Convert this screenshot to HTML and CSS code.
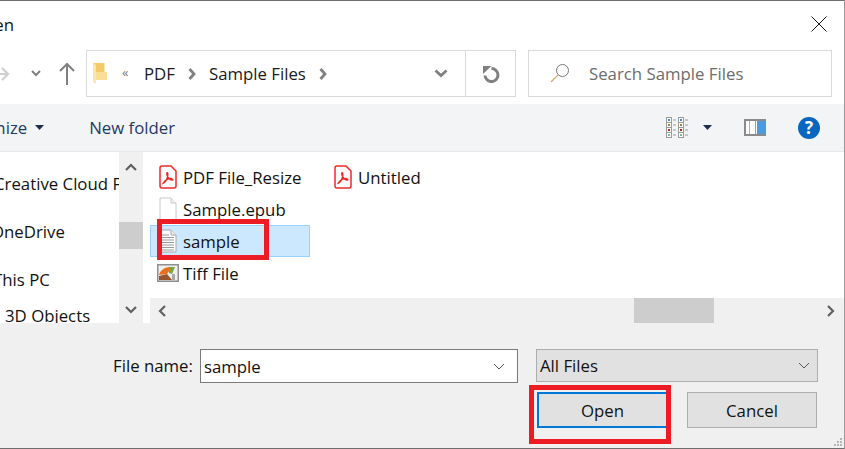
FILE: index.html
```html
<!DOCTYPE html>
<html lang="en">
<head>
<meta charset="utf-8">
<title>Open</title>
<link rel="stylesheet" href="styles.css">
</head>
<body>
<div class="dialog">
  <header class="titlebar">
    <span class="title">Open</span>
    <svg class="close" width="16" height="16" viewBox="0 0 16 16"><path d="M.5.5l15 15M15.500.5l-15 15" stroke="#111" stroke-width="1" fill="none"/></svg>
  </header>

  <div class="addressrow">
    <div class="nav">
      <svg class="nav-fwd" width="14" height="16" viewBox="0 0 14 16"><path d="M0 8h11M5 2l6 6-6 6" stroke="#cfcfcf" stroke-width="2.200" fill="none"/></svg>
      <svg class="nav-drop" width="10" height="7" viewBox="0 0 10 7"><path d="M1 1l4 4 4-4" stroke="#808080" stroke-width="2" fill="none"/></svg>
      <svg class="nav-up" width="16" height="23" viewBox="0 0 16 23"><path d="M8 23V2M1 9l7-7 7 7" stroke="#808080" stroke-width="2" fill="none"/></svg>
    </div>
    <div class="address">
      <svg class="folder" width="14" height="21" viewBox="0 0 14 21"><path d="M0 0h11.500v17H0z" fill="#f2cb66"/><path d="M3 9h11v8H3z" fill="#f9df95"/><path d="M0 0l3 2v19l-3-2z" fill="#fbe7ab"/></svg>
      <span class="crumb-more">«</span>
      <span class="crumb">PDF</span>
      <svg class="sep" width="8" height="12" viewBox="0 0 8 12"><path d="M1.500 1l4.500 5-4.500 5" stroke="#808080" stroke-width="2.800" fill="none"/></svg>
      <span class="crumb">Sample Files</span>
      <svg class="sep" width="8" height="12" viewBox="0 0 8 12"><path d="M1.500 1l4.500 5-4.500 5" stroke="#808080" stroke-width="2.800" fill="none"/></svg>
      <span class="address-fill"></span>
      <span class="address-drop"><svg width="14" height="9" viewBox="0 0 14 9"><path d="M1.500 1.500l5.500 5 5.500-5" stroke="#808080" stroke-width="2.800" fill="none"/></svg></span>
      <span class="address-refresh"><svg width="18" height="18" viewBox="0 0 18 18"><path d="M9.500 3.600A6.500 6.500 0 1 1 3 10.500" stroke="#808080" stroke-width="3" fill="none"/><path d="M1 1h8.500L1 9z" fill="#808080"/></svg></span>
    </div>
    <div class="search">
      <svg class="search-icon" width="20" height="20" viewBox="0 0 20 20"><circle cx="12.500" cy="7.500" r="6" stroke="#777" stroke-width="1" fill="none"/><path d="M8 12l-7 7" stroke="#d9a877" stroke-width="1.300"/></svg>
      <span class="search-text">Search Sample Files</span>
    </div>
  </div>

  <div class="toolbar">
    <span class="organize">Organize</span>
    <svg class="caret" width="9" height="5" viewBox="0 0 9 5"><path d="M0 0h9L4.500 5z" fill="#1e2f4d"/></svg>
    <span class="newfolder">New folder</span>
    <span class="toolbar-fill"></span>
    <svg class="views" width="24" height="22" viewBox="0 0 24 22">
      <g fill="#fff" stroke="#9a9a9a"><rect x=".5" y=".5" width="5" height="5"/><rect x=".5" y="5.500" width="5" height="5"/><rect x=".5" y="10.500" width="5" height="5"/><rect x=".5" y="15.500" width="5" height="5"/><rect x="12.500" y=".5" width="5" height="5"/><rect x="12.500" y="5.500" width="5" height="5"/><rect x="12.500" y="10.500" width="5" height="5"/><rect x="12.500" y="15.500" width="5" height="5"/></g>
      <g><rect x="2" y="2" width="2" height="2" fill="#3a8fc0"/><rect x="2" y="7" width="2" height="2" fill="#8a8a20"/><rect x="2" y="12" width="2" height="2" fill="#b02a10"/><rect x="2" y="17" width="2" height="2" fill="#8fb08f"/><rect x="14" y="2" width="2" height="2" fill="#3a8fc0"/><rect x="14" y="7" width="2" height="2" fill="#8a8a20"/><rect x="14" y="12" width="2" height="2" fill="#b02a10"/><rect x="14" y="17" width="2" height="2" fill="#8fb08f"/></g>
      <path d="M7 3h3M7 8h3M7 13h3M7 18h3M19 3h3M19 8h3M19 13h3M19 18h3" stroke="#9a9a9a"/>
    </svg>
    <svg class="caret views-caret" width="9" height="5" viewBox="0 0 9 5"><path d="M0 0h9L4.500 5z" fill="#1e2f4d"/></svg>
    <svg class="pane" width="22" height="17" viewBox="0 0 22 17"><rect x="1" y="1" width="20" height="15" fill="#fff" stroke="#8a8a8a" stroke-width="2"/><path d="M5.500 2v13" stroke="#b0b0b0"/><path d="M11.500 2v13" stroke="#a0a0a0"/><rect x="13" y="2" width="8" height="13" fill="#4a9be0"/></svg>
    <svg class="help" width="22" height="22" viewBox="0 0 22 22"><circle cx="11" cy="11" r="11" fill="#0a67c0"/><text x="11" y="17" text-anchor="middle" class="help-mark">?</text></svg>
  </div>

  <div class="main">
    <aside class="sidebar">
      <nav class="tree">
        <div class="tree-item tree-cc">Creative Cloud Files</div>
        <div class="tree-item tree-od">OneDrive</div>
        <div class="tree-item tree-pc">This PC</div>
        <div class="tree-item tree-3d">3D Objects</div>
      </nav>
      <div class="vscroll">
        <svg width="12" height="8" viewBox="0 0 12 8"><path d="M1 7l5-5 5 5" stroke="#606060" stroke-width="2.200" fill="none"/></svg>
        <div class="vthumb"></div>
        <svg width="12" height="8" viewBox="0 0 12 8"><path d="M1 1l5 5 5-5" stroke="#606060" stroke-width="2.200" fill="none"/></svg>
      </div>
    </aside>
    <div class="divider"></div>
    <section class="content">
      <div class="files">
        <div class="file">
          <svg class="ficon" width="18" height="24" viewBox="0 0 18 24"><path d="M1 3a2 2 0 0 1 2-2h9l5 5v15a2 2 0 0 1-2 2H3a2 2 0 0 1-2-2z" fill="#fff" stroke="#ee2a24" stroke-width="1.500"/><path d="M4.500 18c2.500-1 5-6 4.200-9.500-.5-2-1.500 0-.5 2 1 3 2.800 4.500 5.300 4.500 1 0-.5-1.500-2-1.500-3 0-5.500 2-7 4.500z" fill="none" stroke="#ee2a24" stroke-width="1.500"/></svg>
          <span>PDF File_Resize</span>
        </div>
        <div class="file">
          <svg class="ficon" width="18" height="24" viewBox="0 0 18 24"><path d="M1 1h11l5 5v17H1z" fill="#fff" stroke="#c8c8c8"/><path d="M12 1v5h5" fill="#f2f2f2" stroke="#c8c8c8"/></svg>
          <span>Sample.epub</span>
        </div>
        <div class="file file-sel">
          <svg class="ficon" width="18" height="24" viewBox="0 0 18 24"><path d="M1 1h11l5 5v17H1z" fill="#fff" stroke="#a8a8a8"/><path d="M12 1v5h5" fill="#eee" stroke="#a8a8a8"/><path d="M3 6h7M3 8.500h12M3 11h12M3 13.500h12M3 16h12M3 18.500h12M3 21h12" stroke="#9a9a9a"/></svg>
          <span>sample</span>
        </div>
        <div class="file">
          <svg class="ficon ficon-wide" width="22" height="18" viewBox="0 0 22 18"><rect x=".75" y=".75" width="20.500" height="16.500" fill="#efefef" stroke="#8f8f8f" stroke-width="1.500"/><path d="M2 11c1-4 4-7 10-8l1 3-3 4z" fill="#e8701e"/><path d="M2 16v-4l8-2 5 6z" fill="#96552e"/><path d="M12 3h6l-3 7-3-1z" fill="#7aa63f"/><path d="M15 10h3v6h-3z" fill="#a9a9a9"/></svg>
          <span>Tiff File</span>
        </div>
        <div class="file file-c2">
          <svg class="ficon" width="18" height="24" viewBox="0 0 18 24"><path d="M1 3a2 2 0 0 1 2-2h9l5 5v15a2 2 0 0 1-2 2H3a2 2 0 0 1-2-2z" fill="#fff" stroke="#ee2a24" stroke-width="1.500"/><path d="M4.500 18c2.500-1 5-6 4.200-9.500-.5-2-1.500 0-.5 2 1 3 2.800 4.500 5.300 4.500 1 0-.5-1.500-2-1.500-3 0-5.500 2-7 4.500z" fill="none" stroke="#ee2a24" stroke-width="1.500"/></svg>
          <span>Untitled</span>
        </div>
      </div>
      <div class="hscroll">
        <svg width="8" height="12" viewBox="0 0 8 12"><path d="M7 1L2 6l5 5" stroke="#606060" stroke-width="2.200" fill="none"/></svg>
        <div class="htrack"><div class="hthumb"></div></div>
        <svg width="8" height="12" viewBox="0 0 8 12"><path d="M1 1l5 5-5 5" stroke="#606060" stroke-width="2.200" fill="none"/></svg>
      </div>
    </section>
  </div>

  <footer class="footer">
    <div class="fields">
      <label class="fname-label">File name:</label>
      <div class="fname">
        <span>sample</span>
        <svg width="12" height="7" viewBox="0 0 12 7"><path d="M1 1l5 5 5-5" stroke="#555" stroke-width="1" fill="none"/></svg>
      </div>
      <div class="ftype">
        <span>All Files</span>
        <svg width="12" height="7" viewBox="0 0 12 7"><path d="M1 1l5 5 5-5" stroke="#555" stroke-width="1" fill="none"/></svg>
      </div>
    </div>
    <div class="buttons">
      <div class="btn btn-open">Open</div>
      <div class="btn">Cancel</div>
    </div>
    <svg class="grip" width="10" height="10" viewBox="0 0 10 10"><path d="M7 1h2v2H7zM4 4h2v2H4zM7 4h2v2H7zM1 7h2v2H1zM4 7h2v2H4zM7 7h2v2H7z" fill="#b5b5b5"/></svg>
  </footer>

  <div class="mark mark-file"></div>
  <div class="mark mark-open"></div>
</div>
</body>
</html>
```

FILE: styles.css
```css
* { box-sizing: border-box; }
html, body { margin: 0; padding: 0; background: #fff; }
.dialog {
  position: relative;
  width: 845px;
  height: 449px;
  overflow: hidden;
  display: flex;
  flex-direction: column;
  background: #fff;
  border-top: 1px solid #6e6e6e;
  border-bottom: 1px solid #6e6e6e;
  border-right: 1px solid #9a9a9a;
  font-family: "Open Sans", "Noto Sans", sans-serif;
  font-size: 16.8px;
  color: #111;
}
.titlebar { height: 49px; display: flex; align-items: center; justify-content: space-between; padding-right: 17px; flex: none; }
.title { margin-left: -29px; padding-bottom: 2px; }
.close { margin-bottom: 3px; }

.addressrow { height: 54px; flex: none; display: flex; padding-right: 12px; align-items: flex-start; }
.nav { width: 86px; height: 47px; display: flex; align-items: center; flex: none; }
.nav-fwd { margin-left: -3px; }
.nav-drop { margin-left: 20px; }
.nav-up { margin-left: 18px; }
.address { width: 430px; height: 47px; border: 1px solid #d9d9d9; display: flex; align-items: center; padding-left: 6px; flex: none; }
.folder { margin-right: 15px; }
.crumb-more { color: #777; font-size: 13px; width: 22px; margin-bottom: 3px; }
.crumb { margin-right: 13px; color: #1a1a1a; }
.sep { margin-right: 13px; }
.address-fill { flex: 1; }
.address-drop { width: 49px; height: 100%; display: flex; align-items: center; justify-content: center; }
.address-refresh { width: 50px; height: 100%; border-left: 1px solid #d9d9d9; display: flex; align-items: center; justify-content: center; }
.search { width: 304px; height: 47px; margin-left: 12px; border: 1px solid #d9d9d9; display: flex; align-items: center; padding-left: 21px; flex: none; }
.search-icon { margin-right: 19px; margin-bottom: 2px; }
.search-text { color: #6d6d6d; }

.toolbar { height: 48px; flex: none; background: #f3f4f6; display: flex; align-items: center; border-bottom: 1px solid #e8e8e8; padding-right: 24px; }
.organize { margin-left: -43px; color: #1f3a64; }
.caret { margin-left: 8px; }
.newfolder { margin-left: 45px; color: #1f3a64; }
.toolbar-fill { flex: 1; }
.views { margin-right: 0; }
.views-caret { margin-left: 13px; }
.pane { margin-left: 32px; }
.help { margin-left: 32px; }
.help-mark { fill: #fff; font: bold 17px "Open Sans", sans-serif; }

.main { height: 171px; flex: none; display: flex; background: #fff; }
.sidebar { width: 143px; flex: none; display: flex; overflow: hidden; }
.tree { width: 119px; flex: none; overflow: hidden; position: relative; }
.tree-item { white-space: nowrap; height: 36px; line-height: 36px; }
.tree-cc { margin-left: -6px; margin-top: 14px; height: 48px; line-height: 36px; }
.tree-od { margin-left: -9px; height: 48px; line-height: 36px; }
.tree-pc { margin-left: -7px; height: 36px; }
.tree-3d { margin-left: 5px; margin-top: 0; }
.vscroll { width: 24px; flex: none; background: #f0f0f0; display: flex; flex-direction: column; align-items: center; padding: 11px 0 9px; }
.vthumb { width: 24px; height: 27px; background: #cdcdcd; margin: 51px 0 auto; }
.divider { width: 7px; flex: none; background: #fff; border-left: 2px solid #fff; }
.content { flex: 1; display: flex; flex-direction: column; min-width: 0; }
.files { height: 146px; padding-top: 9px; display: grid; grid-auto-flow: column; grid-template-rows: repeat(4, 32px); grid-template-columns: 160px 160px; column-gap: 15px; align-content: start; }
.file { display: flex; align-items: center; padding-left: 8px; gap: 6px; white-space: nowrap; border: 1px solid transparent; }
.file:last-child { grid-row: 1; }
.ficon { flex: none; }
.ficon-wide { margin: 0 -2px; }
.file-sel { background: #cce8ff; border-color: #99d1ff; }
.hscroll { height: 25px; background: #f0f0f0; display: flex; align-items: center; padding: 0 9px 0 8px; }
.htrack { flex: 1; height: 25px; padding-left: 468px; }
.hthumb { width: 80px; height: 25px; background: #cdcdcd; }

.footer { flex: 1; background: #f0f0f0; position: relative; }
.fields { display: flex; align-items: flex-start; padding: 26px 0 0 113px; }
.fname-label { width: 87px; line-height: 34px; white-space: nowrap; }
.fname { width: 318px; height: 34px; border: 1px solid #7a7a7a; background: #fff; display: flex; align-items: center; justify-content: space-between; padding: 0 12px 0 3px; }
.ftype { width: 282px; height: 33px; margin-left: 18px; border: 1px solid #adadad; background: #e1e1e1; display: flex; align-items: center; justify-content: space-between; padding: 0 7px 0 3px; }
.buttons { display: flex; gap: 19px; padding: 9px 0 0 537px; }
.btn { width: 130px; height: 36px; background: #e1e1e1; border: 1px solid #adadad; display: flex; align-items: center; justify-content: center; padding-top: 1px; }
.btn-open { width: 131px; border: 2px solid #0078d7; }
.grip { position: absolute; right: 1px; bottom: 1px; }

.mark { position: absolute; border: 5px solid #ed1c24; }
.mark-file { left: 157px; top: 218px; width: 112px; height: 41px; }
.mark-open { left: 529px; top: 384px; width: 142px; height: 59px; }
```
